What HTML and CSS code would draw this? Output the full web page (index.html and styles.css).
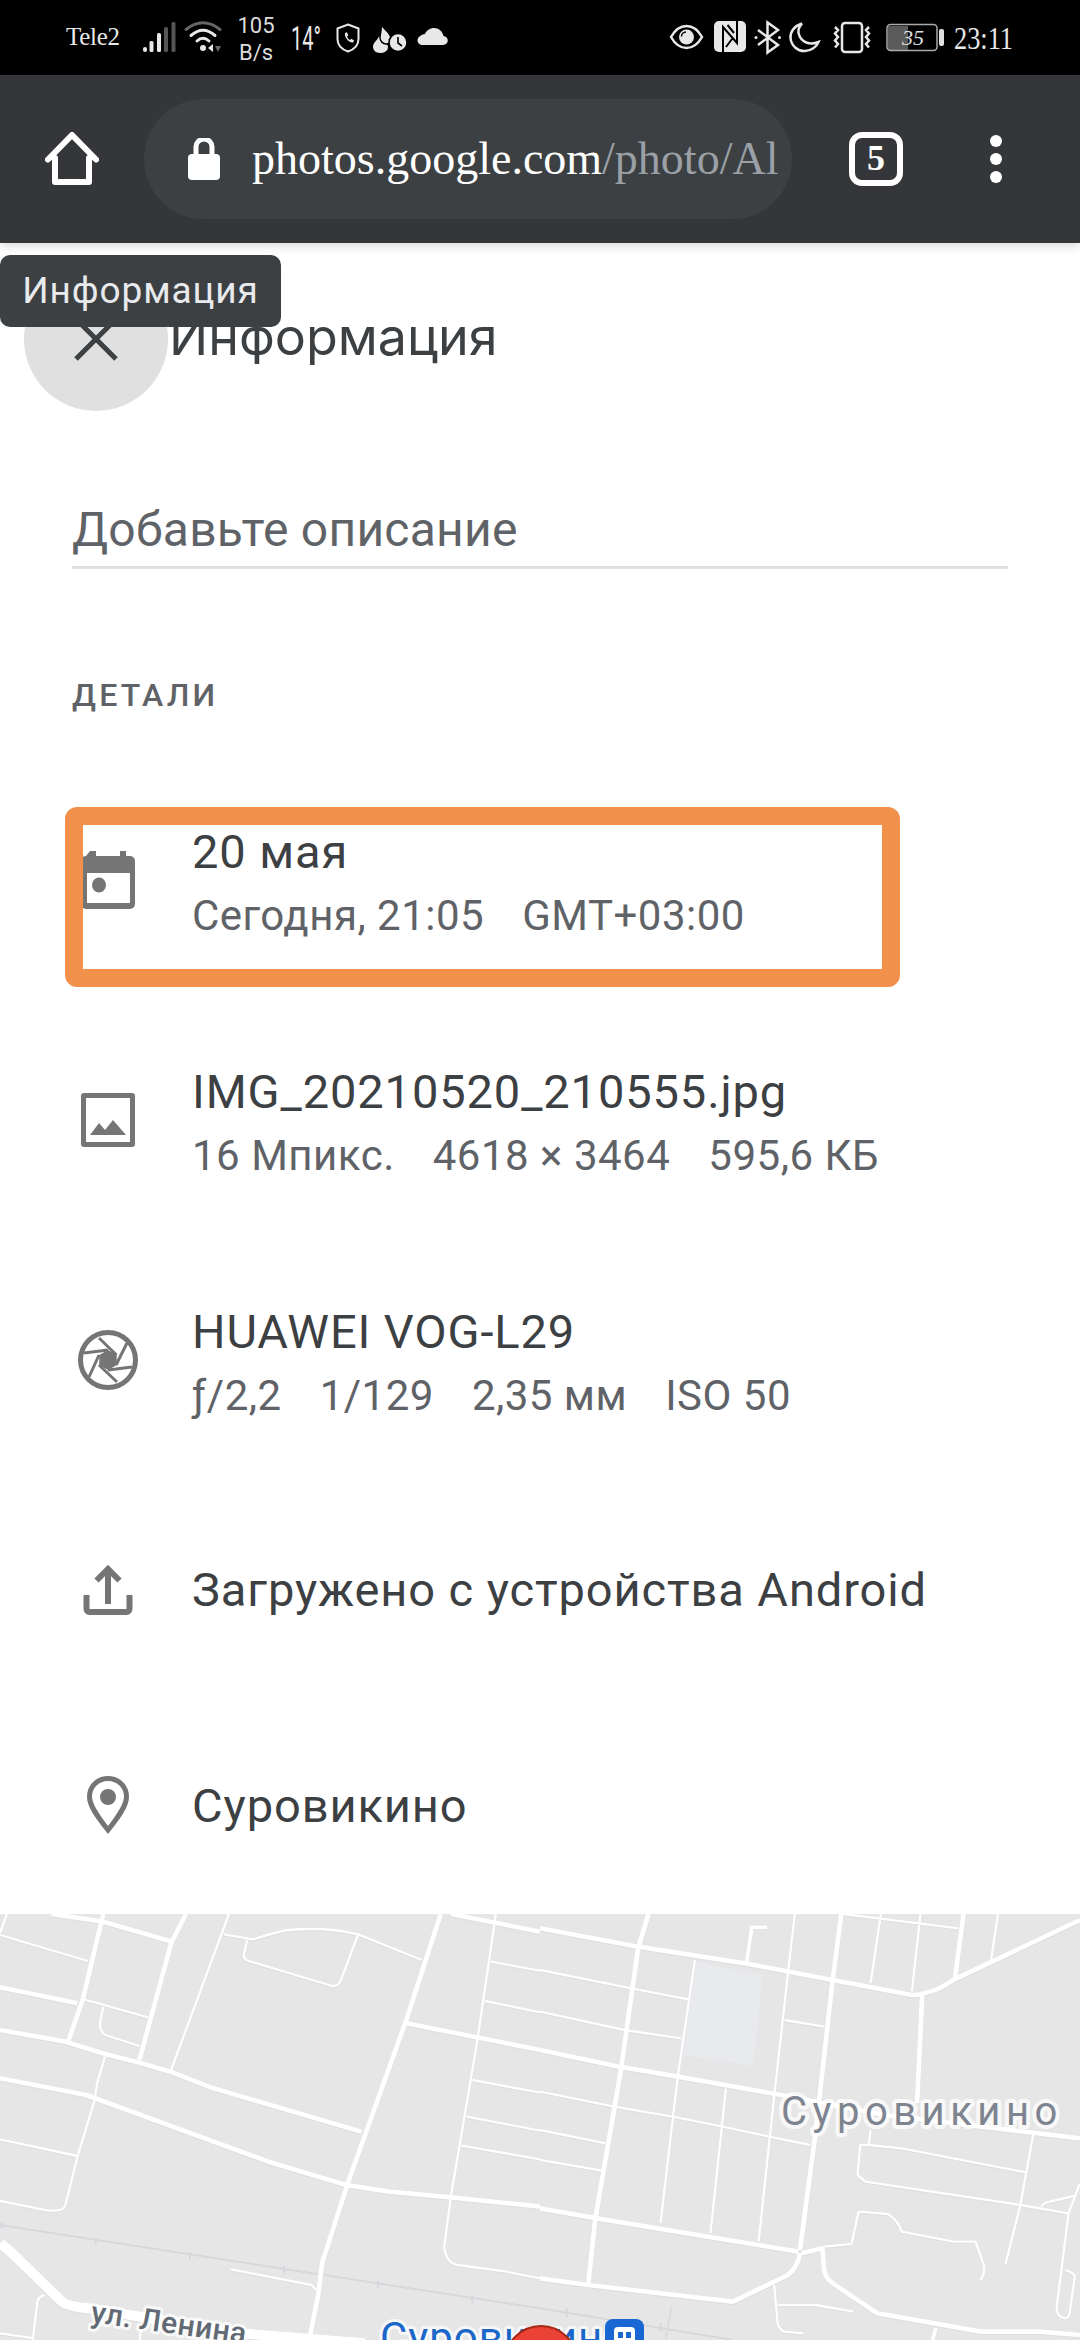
FILE: index.html
```html
<!DOCTYPE html>
<html lang="ru">
<head>
<meta charset="utf-8">
<title>Информация</title>
<link rel="stylesheet" href="styles.css">
</head>
<body>
<div class="phone">
  <header class="status">
    <span class="carrier">Tele2</span>
    <svg class="si w34" viewBox="143 0 34 75"><rect x="143" y="47" width="4" height="5" rx="2" fill="#e8e8e8"/><rect x="149.500" y="41" width="4" height="11" rx="1.500" fill="#e8e8e8"/><rect x="157" y="33" width="4" height="19" rx="1.500" fill="#e8e8e8"/><rect x="164" y="27" width="4" height="25" rx="1.500" fill="#555"/><rect x="171.500" y="22" width="4" height="30" rx="1.500" fill="#555"/></svg>
    <svg class="si w40 m6" viewBox="183 0 40 75"><g fill="none" stroke-linecap="round"><path d="M186 29.500Q203 16 220 29.500" stroke="#666" stroke-width="3"/><path d="M191 35.500Q203 25 215 35.500" stroke="#e8e8e8" stroke-width="3"/><path d="M197 41Q203 35.500 209 41" stroke="#e8e8e8" stroke-width="3"/></g><circle cx="203" cy="48" r="3" fill="#e8e8e8"/><path d="M213 44v8l-5-4z" fill="#e8e8e8"/><path d="M215 46h6l-3 6z" fill="#666"/></svg>
    <div class="speed m13">105<br>B/s</div>
    <svg class="si w32 m14" viewBox="290 0 32 75"><text class="narrow" x="291" y="50" textLength="30" lengthAdjust="spacingAndGlyphs">14°</text></svg>
    <svg class="si w26 m13" viewBox="335 0 26 75"><path d="M348 24.500l10.500 4v10.500c0 6-4.500 10.500-10.500 12.500-6-2-10.500-6.500-10.500-12.500V28.500z" fill="none" stroke="#e8e8e8" stroke-width="2"/><path d="M345 33l2-.8 1.300 3.300-1.300 1.200c.8 1.600 1.800 2.600 3 3.200l1.300-1.100 2.800 1.600-1 2c-4.500.5-9-5.500-8.100-9.400z" fill="#e8e8e8"/></svg>
    <svg class="si w36 m11" viewBox="372 0 36 75"><path d="M379 36c3 4 9 7 9 11 0 4-4 6-8 6s-7-3-7-6c0-5 5-7 6-11z" fill="#e8e8e8"/><path d="M381 24c2 5 10 8 10 15 0 3-2 5-5 5s-6-3-6-6c0-5 2-8 1-14z" fill="#e8e8e8" stroke="#000" stroke-width="1.500"/><circle cx="398" cy="42.500" r="9" fill="#e8e8e8" stroke="#000" stroke-width="1.500"/><path d="M398 37v6l4 3" fill="none" stroke="#000" stroke-width="1.600"/></svg>
    <svg class="si w32 m8" viewBox="416 0 32 75"><path d="M422 45h21a4.500 4.500 0 0 0 .5-9c-1-5-5-8-9.500-8-4 0-7.500 2.500-9 6-3.500.5-7.500 3-7.500 6.500 0 2.500 2.500 4.500 5 4.500z" fill="#e8e8e8"/></svg>
    <div class="status-right">
      <svg class="si w35" viewBox="669 0 35 75"><path d="M671 37c4.500-8 10-11 15.500-11s11 3 15.500 11c-4.500 8-10 11-15.500 11s-11-3-15.500-11z" fill="none" stroke="#e8e8e8" stroke-width="2.500"/><circle cx="686.500" cy="37" r="7.500" fill="#e8e8e8"/><path d="M686 32c-2.500 0-4.500 2-4.500 4.500" fill="none" stroke="#000" stroke-width="1.500"/></svg>
      <svg class="si w34 m9" viewBox="713 0 34 75"><rect x="714" y="21" width="32" height="31" rx="5" fill="#e8e8e8"/><path d="M723 52V27l14 16V21M727.500 25l6.500 8M726 47l6-8" fill="none" stroke="#000" stroke-width="2"/></svg>
      <svg class="si w27 m7" viewBox="754 0 27 75"><path d="M758 30l20 15-10.500 7.500v-30L778 30l-20 15" fill="none" stroke="#e8e8e8" stroke-width="2.500"/><circle cx="756" cy="37.500" r="1.500" fill="#e8e8e8"/><circle cx="779.500" cy="37.500" r="1.500" fill="#e8e8e8"/></svg>
      <svg class="si w32 m8" viewBox="789 0 32 75"><path d="M802 23.500c-8 2.500-12 8.500-11.500 14.500.8 8 7.500 13.500 14.500 13 6-.5 11.500-4 13.500-9-8.500 3.500-16 .5-19-6-2-4.500-1-9 2.500-12.500z" fill="none" stroke="#e8e8e8" stroke-width="2.500"/></svg>
      <svg class="si w42 m10" viewBox="831 0 42 75"><rect x="842" y="23" width="20" height="29" rx="3" fill="none" stroke="#e8e8e8" stroke-width="2.500"/><path d="M835 27l3 3-3 3.500 3 3.500-3 3.500 3 3.500-3 3.500M869 27l-3 3 3 3.500-3 3.500 3 3.500-3 3.500 3 3.500" fill="none" stroke="#e8e8e8" stroke-width="2.500"/></svg>
      <svg class="si w59 m13" viewBox="886 0 59 75"><rect x="888" y="26" width="20" height="24" fill="#5a5a5a"/><rect x="887" y="24.500" width="50" height="26" rx="3.500" fill="none" stroke="#aaa" stroke-width="1.500"/><rect x="939" y="29" width="5" height="17" rx="2" fill="#e0e0e0"/><text class="batt" x="902" y="45">35</text></svg>
      <svg class="si w61 m8" viewBox="953 0 61 75"><text class="clock" x="954" y="49" textLength="59" lengthAdjust="spacingAndGlyphs">23:11</text></svg>
    </div>
  </header>

  <nav class="toolbar">
    <svg class="home" viewBox="45 132 54 54"><path d="M55 158v24h34v-24M48 159.500l24-24.500 24 24.500" fill="none" stroke="#fff" stroke-width="6" stroke-linejoin="round" stroke-linecap="round"/></svg>
    <div class="pill">
      <svg class="lock" viewBox="188 137 32 42"><path d="M196 154v-8a8 8 0 0 1 16 0v8" fill="none" stroke="#fff" stroke-width="5"/><rect x="188" y="153" width="32" height="26" rx="4" fill="#fff"/></svg>
      <div class="url"><span class="host">photos.google.com</span>/photo/Al</div>
    </div>
    <div class="tabs">5</div>
    <div class="dots"><span></span><span></span><span></span></div>
  </nav>

  <main class="panel">
    <div class="head">
      <div class="close">
        <svg class="close-x" viewBox="0 0 44 44"><path d="M2 2l40 40M42 2L2 42" fill="none" stroke="#3c4043" stroke-width="5"/></svg>
      </div>
      <h1 class="title">Информация</h1>
    </div>
    <div class="tooltip">Информация</div>

    <div class="desc">Добавьте описание</div>
    <div class="details-h">ДЕТАЛИ</div>

    <div class="row r1">
      <svg class="ico" viewBox="0 0 60 60"><path fill-rule="evenodd" d="M12 1h6v5h24V1h6v5h4a5 5 0 0 1 5 5v43a5 5 0 0 1-5 5H8a5 5 0 0 1-5-5V11a5 5 0 0 1 5-5zM9 23v30h43V23z" fill="#757575"/><ellipse cx="21" cy="35" rx="7" ry="7.500" fill="#757575"/></svg>
      <div class="txt">
        <div class="pri">20 мая</div>
        <div class="sec"><span>Сегодня, 21:05</span><span>GMT+03:00</span></div>
      </div>
    </div>
    <div class="row r2">
      <svg class="ico" viewBox="0 0 60 60"><path fill-rule="evenodd" d="M6 3h48a3 3 0 0 1 3 3v48a3 3 0 0 1-3 3H6a3 3 0 0 1-3-3V6a3 3 0 0 1 3-3zM8 8v44h44V8z" fill="#757575"/><path d="M12 45l9-12 6 7 8-10 13 15z" fill="#757575"/></svg>
      <div class="txt">
        <div class="pri">IMG_20210520_210555.jpg</div>
        <div class="sec"><span>16 Мпикс.</span><span>4618 × 3464</span><span>595,6 КБ</span></div>
      </div>
    </div>
    <div class="row r3">
      <svg class="ico" viewBox="0 0 60 60"><circle cx="30" cy="30" r="27.500" fill="none" stroke="#757575" stroke-width="5"/><path d="M30 20l8.700 5v10L30 40l-8.700-5V25z" fill="#757575"/><path d="M21 8l17.500 17M49 13L38 35M54 37L30 40M39 52L21 35M11 47l10-22M6 23l24-3" fill="none" stroke="#757575" stroke-width="3"/></svg>
      <div class="txt">
        <div class="pri">HUAWEI VOG-L29</div>
        <div class="sec"><span>ƒ/2,2</span><span>1/129</span><span>2,35 мм</span><span>ISO 50</span></div>
      </div>
    </div>
    <div class="row r4">
      <svg class="ico" viewBox="0 0 60 60"><path d="M30 44V10M18.500 20.500L30 9l11.500 11.500" fill="none" stroke="#757575" stroke-width="6"/><path d="M8.500 35v14a3 3 0 0 0 3 3h37a3 3 0 0 0 3-3V35" fill="none" stroke="#757575" stroke-width="6"/></svg>
      <div class="txt"><div class="pri">Загружено с устройства Android</div></div>
    </div>
    <div class="row r5">
      <svg class="ico" viewBox="0 0 60 60"><path d="M30 2.500C19.500 2.500 11.500 10.500 11.500 21c0 9 9 21 18.500 33 9.500-12 18.500-24 18.500-33C48.500 10.500 40.500 2.500 30 2.500z" fill="none" stroke="#757575" stroke-width="5"/><circle cx="30" cy="21" r="8" fill="#757575"/></svg>
      <div class="txt"><div class="pri">Суровикино</div></div>
    </div>

    <div class="mark"></div>
  </main>

  <svg class="map" viewBox="0 0 1080 426">
    <rect width="1080" height="426" fill="#e6e6e6"/>
    <g transform="translate(0,-14) scale(.34435,.33333)">
      <g class="rail">
        <path d="M0 975L1568 1225M5 965v20M278 1012v22M552 1056v22M825 1098v22M1098 1143v22M1372 1188v22"/>
      </g>
      <g class="roads">
        <g class="thin">
          <path d="M20 42L0 100M0 105L255 183M240 297L430 352M300 320L290 370Q290 395 305 405L405 438M665 42L497 510M650 103L735 118Q790 100 835 90Q950 80 1040 103L1225 180M718 120L708 165Q708 178 720 182L965 258Q985 258 990 240L1040 105M305 470L282 550L275 600L225 770L190 915Q185 932 160 932H140L0 903M0 718L225 768M1440 42L1385 430L1310 885L1290 1040Q1295 1090 1330 1095L1470 1115L1568 1135M1425 185L1568 212M1408 303L1568 337M1372 540L1568 578M1355 650L1568 692M1340 737L1568 778M670 1108L905 1155L918 1170M130 1185Q110 1190 108 1210L95 1320M0 1300L100 1315M410 1290L405 1320"/>
        </g>
        <g class="thick">
          <path d="M150 42L300 65L500 125M300 42L240 300L197 428M0 262L225 310M0 390L190 425L305 462L400 487L500 517L620 565L1050 695M0 535L250 585L780 785L1005 855L1130 875L1310 892L1568 920M1180 370L1568 450M1310 42L1568 95M540 42L497 130L405 480"/>
          <path d="M1280 42L1180 360L1010 850L935 1090L925 1180L900 1310"/>
        </g>
        <path class="wide" d="M0 1030L25 1050L180 1205Q200 1220 260 1225L700 1300L1060 1330"/>
      </g>
    </g>
    <g transform="translate(540,-14) scale(.34435,.33333)">
      <polygon points="450,185 645,225 620,497 412,465" fill="#e8eaed"/>
      <g class="rail">
        <path d="M0 1225L560 1320M78 1225v26M350 1270v26"/>
      </g>
      <path class="rail-thin" d="M382 1218L365 1320"/>
      <g class="roads">
        <g class="thin">
          <path d="M0 210L265 265L430 298M0 335L245 390L410 415M0 575L215 620L385 650L530 680L665 710L785 735M0 690L190 730M0 780L180 812M450 180L400 530L350 970M540 565L495 1000M740 42L720 220L680 590L635 1025M710 360L825 380M990 42L960 250M1105 42L1080 275M880 42L1215 85M1330 42L1310 180M960 690L955 735H930L922 825L945 845L1395 915L1535 940M955 735L1050 745L1415 818M1432 705L1395 915L1352 1092M1568 850L1535 940L1500 1225Q1500 1250 1525 1255Q1535 1255 1538 1240L1553 1130Q1553 1120 1525 1110M1455 920Q1470 905 1480 905L1550 888M905 1030L925 935L1010 942Q1040 960 1050 995L1200 1025H1265L1290 1100Q1290 1130 1278 1140M825 1040L905 1032M680 1155L690 1270Q695 1290 710 1295L765 1300M690 1215H800L910 1235"/>
          <path class="mid" d="M600 190L615 82H660M1150 1285L1140 1320"/>
        </g>
        <g class="thick">
          <path d="M0 85L285 140L595 190L850 240L1080 285Q1110 285 1160 265L1210 235L1568 60M315 42L285 145L235 510L160 960L140 1155M875 42L850 240L800 700L755 1050M0 450L230 500L400 530L700 585L1000 645L1568 715M0 925L165 955L750 1055M0 1135L140 1155L560 1205L720 1125Q750 1100 755 1060M1230 42L1205 235M1110 285L1095 610M760 1060L820 1045L825 1110Q830 1135 850 1150L980 1240L1280 1295H1450L1568 1305"/>
        </g>
      </g>
    </g>
    <text class="town" x="781" y="211">Суровикино</text>
    <text class="street" transform="translate(90,408) rotate(8)">ул. Ленина</text>
    <text class="stop" x="380" y="438">Суровикино</text>
    <circle cx="541" cy="448" r="36" fill="#ea4335" stroke="#a52714" stroke-width="2"/>
    <rect x="605" y="405" width="39" height="39" rx="8" fill="#1967d2"/>
    <path d="M614 426v-9a4 4 0 0 1 4-4h13a4 4 0 0 1 4 4v9z" fill="#fff"/>
    <rect x="618" y="418" width="5" height="6" fill="#1967d2"/><rect x="626" y="418" width="5" height="6" fill="#1967d2"/>
  </svg>
</div>
</body>
</html>
```
FILE: styles.css
```css
* { box-sizing: border-box; }
html, body { margin: 0; padding: 0; background: #fff; }
.phone { width: 1080px; height: 2340px; overflow: hidden; display: flex; flex-direction: column; font-family: Roboto, sans-serif; }

/* status bar */
.status { height: 75px; flex: none; background: #000; color: #e8e8e8; display: flex; align-items: center; padding-left: 66px; }
.carrier { width: 77px; font: 25px "Liberation Serif", serif; letter-spacing: -.3px; flex: none; padding-bottom: 2px; }
.si { height: 75px; flex: none; display: block; overflow: visible; }
.w26 { width: 26px; } .w27 { width: 27px; } .w32 { width: 32px; } .w34 { width: 34px; } .w35 { width: 35px; }
.w36 { width: 36px; } .w40 { width: 40px; } .w42 { width: 42px; } .w59 { width: 59px; } .w61 { width: 61px; }
.m6 { margin-left: 6px; } .m7 { margin-left: 7px; } .m8 { margin-left: 8px; } .m9 { margin-left: 9px; } .m10 { margin-left: 10px; }
.m11 { margin-left: 11px; } .m13 { margin-left: 13px; } .m14 { margin-left: 14px; }
.speed { width: 40px; font-size: 22px; line-height: 27px; text-align: center; padding-top: 3px; color: #ddd; flex: none; }
.narrow { font: 33px Roboto, sans-serif; fill: #e8e8e8; }
.batt { font: italic 22px "Liberation Serif", serif; fill: #e0e0e0; }
.clock { font: 31px "Liberation Serif", serif; fill: #e8e8e8; }
.status-right { margin-left: auto; padding-right: 66px; display: flex; align-items: center; }

/* browser toolbar */
.toolbar { height: 168px; flex: none; background: #35363a; display: flex; align-items: center; position: relative; z-index: 2; box-shadow: 0 2px 10px rgba(0,0,0,.18); }
.home { width: 54px; height: 54px; margin-left: 45px; flex: none; }
.pill { width: 648px; height: 120px; margin-left: 45px; border-radius: 60px; background: #3c4043; display: flex; align-items: center; flex: none; }
.lock { width: 32px; height: 42px; margin-left: 44px; flex: none; }
.url { margin-left: 32px; white-space: nowrap; font: 46px/60px "Liberation Serif", serif; color: #9aa0a6; }
.host { color: #fff; }
.tabs { width: 54px; height: 54px; margin-left: 57px; flex: none; border: 6px solid #fff; border-radius: 13px; color: #fff; font: bold 36px/41px "Liberation Serif", serif; text-align: center; }
.dots { margin-left: 87px; display: flex; flex-direction: column; gap: 6px; flex: none; }
.dots span { width: 12px; height: 12px; border-radius: 50%; background: #fff; display: block; }

/* info panel */
.panel { position: relative; flex: none; height: 1671px; background: #fff; }
.head { display: flex; padding: 24px 0 0 24px; align-items: center; }
.close { width: 144px; height: 144px; border-radius: 50%; background: #e0e0e0; display: flex; align-items: center; justify-content: center; flex: none; }
.close-x { width: 44px; height: 44px; }
.title { margin: 0 0 0 1px; padding-bottom: 4px; font-family: Inter, Roboto, sans-serif; font-size: 52px; font-weight: 400; color: #3c4043; line-height: 56px; white-space: nowrap; }
.tooltip { position: absolute; left: 0; top: 12px; width: 281px; height: 72px; border-radius: 10px; background: #3c4043; color: #e8eaed; font-size: 37px; letter-spacing: .9px; line-height: 72px; text-align: center; z-index: 3; }
.desc { margin: 89px 72px 0; height: 69px; line-height: 60px; font-size: 48px; letter-spacing: .25px; color: #5f6368; border-bottom: 3px solid #e0e0e0; padding-bottom: 6px; }
.details-h { margin: 106px 0 0 72px; font-size: 32px; line-height: 40px; font-weight: 500; letter-spacing: 3.2px; color: #5f6368; }

.row { display: flex; align-items: center; padding-left: 78px; }
.r1 { margin-top: 101px; } .r2, .r3 { margin-top: 112px; } .r4 { margin-top: 130px; } .r5 { margin-top: 144px; }
.ico { width: 60px; height: 60px; flex: none; }
.txt { margin-left: 54px; }
.pri { font-size: 47px; letter-spacing: .9px; line-height: 72px; color: #3c4043; white-space: nowrap; }
.sec { font-size: 42px; letter-spacing: .5px; line-height: 56px; color: #5f6368; white-space: nowrap; display: flex; gap: 38px; }

.mark { position: absolute; left: 65px; top: 564px; width: 835px; height: 180px; border: 18px solid #f2914b; border-radius: 12px; }

/* map */
.map { width: 1080px; height: 426px; flex: none; display: block; }
.rail path { fill: none; stroke: #d5d8dc; stroke-width: 6; }
.rail-thin { fill: none; stroke: #dcdcdc; stroke-width: 6; }
.roads { fill: none; stroke: #fff; filter: drop-shadow(0 1px 0 #cfcfcf); }
.roads path { stroke-linejoin: round; }
.thin { stroke-width: 7; }
.thin .mid { stroke-width: 11; }
.thick { stroke-width: 14; }
.wide { stroke-width: 30; }
.town { font: 40px Roboto, sans-serif; letter-spacing: 5.5px; fill: #7e8590; stroke: rgba(255,255,255,.75); stroke-width: 8px; paint-order: stroke; stroke-linejoin: round; }
.street { font: 500 30px Roboto, sans-serif; letter-spacing: .5px; fill: #616a75; stroke: rgba(255,255,255,.75); stroke-width: 6px; paint-order: stroke; stroke-linejoin: round; }
.stop { font: 42px Roboto, sans-serif; letter-spacing: 1px; fill: #1a66c9; stroke: rgba(255,255,255,.7); stroke-width: 6px; paint-order: stroke; stroke-linejoin: round; }
```
